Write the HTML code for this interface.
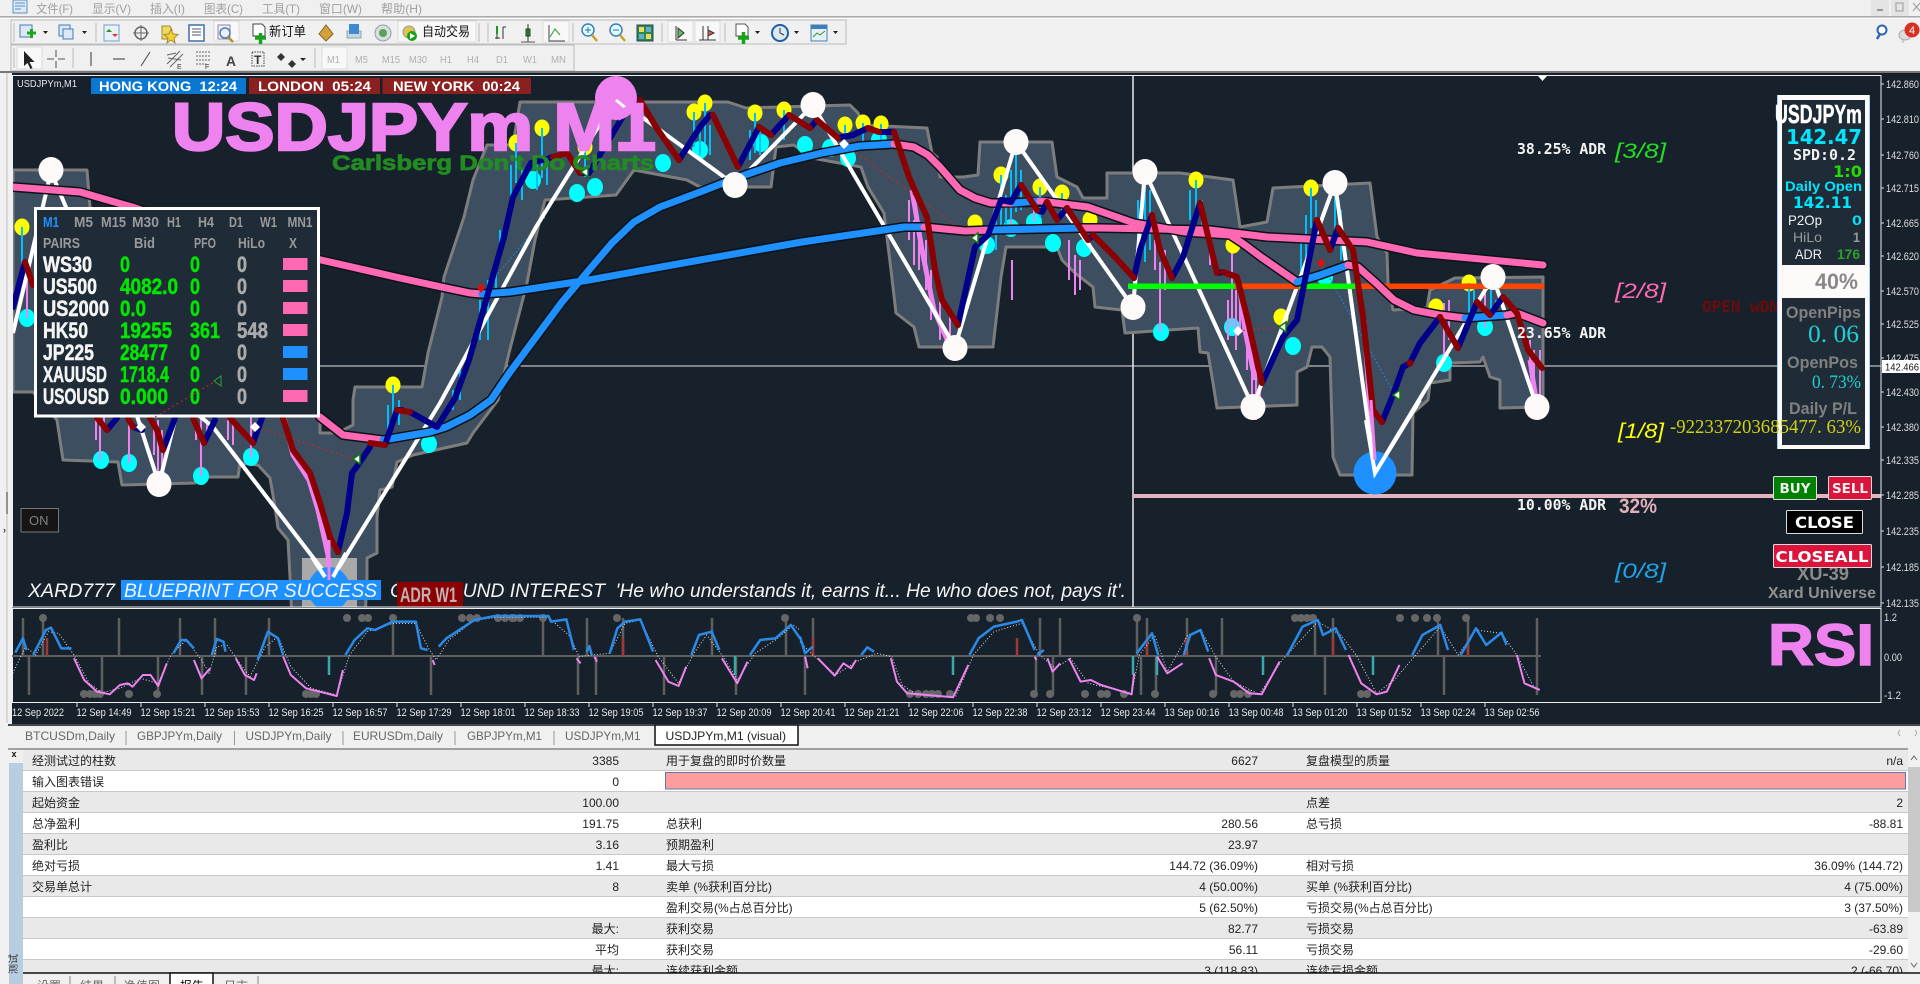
<!DOCTYPE html>
<html><head><meta charset="utf-8"><title>USDJPYm,M1</title>
<style>
html,body{margin:0;padding:0;background:#f0f0f0;width:1920px;height:984px;overflow:hidden}
svg{display:block;position:absolute;left:0;top:0}
text{font-family:"Liberation Sans","Noto Sans CJK SC",sans-serif;white-space:pre}
.b{font-weight:bold}
.m{font-family:"DejaVu Sans Mono","Liberation Mono",monospace}
.dj{font-family:"DejaVu Sans","Liberation Sans",sans-serif;font-weight:bold}
.se{font-family:"Liberation Serif","Noto Serif CJK SC",serif}
.i{font-style:italic}
.t{font-size:12px;fill:#222}
.r{text-anchor:end}
.ax{font-size:11px;fill:#ddd}
.tm{font-size:11px;fill:#e8e8e8}
.tab{font-size:12px;fill:#666}
.mn{font-size:12px;fill:#a0a0a0}
.tf{font-size:10px;fill:#b0b0b0}
.ph{font-size:15px;font-weight:bold;fill:#999}
.pr{font-size:22px;font-weight:bold;stroke-width:.5px}
.ma,.fl{fill:none;stroke-linejoin:round;stroke-linecap:round}
</style></head><body>
<svg width="1920" height="984" viewBox="0 0 1920 984" xmlns="http://www.w3.org/2000/svg">
<defs><clipPath id="cm"><rect x="13" y="76" width="1868" height="531"/></clipPath></defs>
<rect width="1920" height="984" fill="#f0f0f0"/>

<!-- menu bar -->
<g>
<rect x="13" y="0" width="14" height="13" fill="#dce8f4" stroke="#5b8fc4"/>
<path d="M15 3h10M15 6h10M15 9h6" stroke="#5b8fc4"/>
<text class="mn" x="36" y="13" textLength="37" lengthAdjust="spacingAndGlyphs">文件(F)</text>
<text class="mn" x="92" y="13" textLength="39" lengthAdjust="spacingAndGlyphs">显示(V)</text>
<text class="mn" x="150" y="13" textLength="35" lengthAdjust="spacingAndGlyphs">插入(I)</text>
<text class="mn" x="204" y="13" textLength="39" lengthAdjust="spacingAndGlyphs">图表(C)</text>
<text class="mn" x="262" y="13" textLength="38" lengthAdjust="spacingAndGlyphs">工具(T)</text>
<text class="mn" x="319" y="13" textLength="43" lengthAdjust="spacingAndGlyphs">窗口(W)</text>
<text class="mn" x="381" y="13" textLength="41" lengthAdjust="spacingAndGlyphs">帮助(H)</text>
<rect x="1871" y="0" width="18" height="16" fill="#e4e4e4"/><rect x="1891" y="0" width="18" height="16" fill="#e4e4e4"/>
<rect x="1877" y="9" width="6" height="2" fill="#999"/><rect x="1896" y="3" width="7" height="8" fill="none" stroke="#999"/>
<path d="M1913 3l7 8M1920 3l-7 8" stroke="#999"/>
<rect y="16" width="1920" height="1.5" fill="#aaa"/><rect y="18" width="1920" height="1" fill="#fff"/>
</g>

<!-- toolbars -->
<g>
<rect x="11" y="20" width="835" height="24" fill="#f0f0f0" stroke="#bbb"/>
<rect x="11" y="45" width="563" height="26" fill="#f0f0f0" stroke="#bbb"/>
<path d="M14 23v19M14 48v20M479 23v19M315 48v20M96 23v19M237 23v19M488 23v19M573 23v19M662 23v19M725 23v19M73 48v20" stroke="#bbb"/>
<rect x="214" y="21" width="25" height="20" fill="#f8f8f8" stroke="#ddd"/>
<rect x="398" y="21" width="78" height="21" fill="#f8f8f8" stroke="#ddd"/>
<rect x="543" y="21" width="26" height="21" fill="#f8f8f8" stroke="#ddd"/>
<rect x="668" y="21" width="25" height="21" fill="#f8f8f8" stroke="#ddd"/>
<rect x="695" y="21" width="25" height="21" fill="#f8f8f8" stroke="#ddd"/>
<rect x="17" y="47" width="25" height="22" fill="#f8f8f8" stroke="#ddd"/>
<rect x="322" y="47" width="25" height="22" fill="#f8f8f8" stroke="#ddd"/>

<!-- row1 icons -->
<rect x="20" y="25" width="12" height="12" fill="#dce8f4" stroke="#3f7eb8"/><path d="M27 33h9M31.500 29v9" stroke="#1fa51f" stroke-width="3"/>
<path d="M43 31h5l-2.500 3z" fill="#222"/>
<rect x="59" y="25" width="11" height="11" fill="#dce8f4" stroke="#3f7eb8"/><rect x="63" y="29" width="10" height="10" fill="#dce8f4" stroke="#3f7eb8"/>
<path d="M82 31h5l-2.500 3z" fill="#222"/>
<rect x="104" y="25" width="15" height="16" fill="#e8f0f8" stroke="#6f9fca"/><path d="M109 29l3 3h-6z" fill="#1a9a1a"/><path d="M115 37l-3-3h6z" fill="#d33"/>
<circle cx="141" cy="33" r="6" fill="none" stroke="#666" stroke-width="1.500"/><path d="M141 25v16M133 33h16" stroke="#666"/>
<path d="M162 26h8l2 4v9h-10z" fill="#f2d860" stroke="#a08a30"/><path d="M171 29l2 5 5 .5-4 3.500 1 5-4-3-4 3 1-5-4-3.500 5-.5z" fill="#f6d22e" stroke="#a08a30"/>
<rect x="189" y="25" width="15" height="16" fill="#fff" stroke="#3f6fa8" stroke-width="1.500"/><path d="M192 29h9M192 32h9M192 35h9" stroke="#556"/>
<rect x="218" y="25" width="12" height="14" fill="#eef" stroke="#889"/><circle cx="225" cy="33" r="5" fill="none" stroke="#4a7fb4" stroke-width="1.500"/><path d="M228 37l5 5" stroke="#b98a2e" stroke-width="2.500"/>
<path d="M253 24h9l3 3v9h-12z" fill="#fff" stroke="#444"/><path d="M255 38h11M260.500 33v11" stroke="#19a319" stroke-width="3.500"/>
<text x="269" y="36" font-size="13" fill="#111" textLength="37" lengthAdjust="spacingAndGlyphs">新订单</text>
<path d="M319 34l7-9 7 9-7 7z" fill="#d3a03c" stroke="#8a6720"/>
<path d="M347 38h14v-7h-14z" fill="#c5d5e4" stroke="#8aa"/><rect x="349" y="24" width="10" height="10" fill="#3f8ad0"/>
<circle cx="383" cy="33" r="8" fill="#d5e0d8" stroke="#99b"/><circle cx="383" cy="33" r="4" fill="#5aa05a"/>
<circle cx="409" cy="32" r="6" fill="#e0c34a" stroke="#999"/><circle cx="412" cy="36" r="5" fill="#19a019"/><path d="M410 33l5 3-5 3z" fill="#fff"/>
<text x="422" y="36" font-size="13" fill="#111" textLength="48" lengthAdjust="spacingAndGlyphs">自动交易</text>
<path d="M497 26v13M495 38h5M503 27v12M503 27h3" stroke="#333"/><path d="M497 26v8" stroke="#1a9a1a" stroke-width="2"/>
<rect x="526" y="29" width="4" height="7" fill="#1db31d" stroke="#333"/><path d="M528 24v18" stroke="#333"/><path d="M521 42h14" stroke="#555"/>
<path d="M549 25v16h16" fill="none" stroke="#444"/><path d="M550 37l5-8 5 6" fill="none" stroke="#2aa12a"/>
<circle cx="588" cy="30" r="6" fill="#dff" stroke="#3f7eb8" stroke-width="1.500"/><path d="M585 30h6M588 27v6" stroke="#2f6ab8"/><path d="M592 35l5 6" stroke="#c9a020" stroke-width="2.500"/>
<circle cx="616" cy="30" r="6" fill="#dff" stroke="#3f7eb8" stroke-width="1.500"/><path d="M613 30h6" stroke="#2f6ab8"/><path d="M620 35l5 6" stroke="#c9a020" stroke-width="2.500"/>
<rect x="637" y="25" width="16" height="16" fill="#2a8a4a" stroke="#246"/><rect x="639" y="27" width="5" height="5" fill="#f2d860"/><rect x="646" y="27" width="5" height="5" fill="#6ac"/><rect x="639" y="34" width="5" height="5" fill="#6ac"/><rect x="646" y="34" width="5" height="5" fill="#f2d860"/>
<path d="M676 26v14M676 40h11" stroke="#333" fill="none"/><path d="M678 28l6 5-6 5z" fill="#5bbf5b" stroke="#333"/>
<path d="M703 26v14M699 40h17M708 26v14" stroke="#333" fill="none"/><path d="M708 30l6 3-6 3z" fill="#e06060" stroke="#333"/>
<path d="M736 24h9l3 3v9h-12z" fill="#fff" stroke="#555"/><path d="M738 38h11M743.500 32v12" stroke="#19a319" stroke-width="3.500"/><path d="M755 31h5l-2.500 3z" fill="#222"/>
<circle cx="780" cy="33" r="8" fill="#dce8f4" stroke="#1f5fa8" stroke-width="2"/><path d="M780 28v5l4 2" fill="none" stroke="#333"/><path d="M794 31h5l-2.500 3z" fill="#222"/>
<rect x="811" y="25" width="16" height="16" fill="#e8eef6" stroke="#3f7eb8"/><rect x="811" y="25" width="16" height="4" fill="#3f7eb8"/><path d="M813 37l4-4 3 2 5-4" fill="none" stroke="#393"/><path d="M833 31h5l-2.500 3z" fill="#222"/>
<!-- row2 icons -->
<path d="M24 51v15l3.500-3 3 6 2-1-3-6h5z" fill="#222"/>
<path d="M56 50v18M47 59h18" stroke="#555"/><rect x="54" y="57" width="4" height="4" fill="#f0f0f0"/>
<path d="M91 52v14" stroke="#333"/><path d="M113 59h12" stroke="#333"/><path d="M141 66l9-14" stroke="#444"/>
<path d="M167 64l13-13M170 67l13-13M168 58l13 2M167 55l9-2" stroke="#666"/><text x="177" y="69" font-size="7" fill="#333">E</text>
<path d="M196 52h14M196 56h14M196 60h14M196 64h10" stroke="#666" stroke-dasharray="2 1"/><text x="205" y="69" font-size="7" fill="#333">F</text>
<text x="226" y="66" font-size="14" fill="#444" class="b" textLength="10" lengthAdjust="spacingAndGlyphs">A</text>
<rect x="252" y="52" width="12" height="14" fill="none" stroke="#444" stroke-dasharray="1.500 1"/><text x="254" y="64" font-size="12" fill="#333" class="b">T</text>
<path d="M281 53l4 4-4 4-4-4zM292 60l4 4-4 4-4-4z" fill="#333"/><path d="M300 58h6l-3 3z" fill="#222"/>
<text class="tf" x="327" y="63" textLength="13" lengthAdjust="spacingAndGlyphs">M1</text>
<text class="tf" x="355" y="63" textLength="13" lengthAdjust="spacingAndGlyphs">M5</text>
<text class="tf" x="382" y="63" textLength="18" lengthAdjust="spacingAndGlyphs">M15</text>
<text class="tf" x="409" y="63" textLength="18" lengthAdjust="spacingAndGlyphs">M30</text>
<text class="tf" x="440" y="63" textLength="12" lengthAdjust="spacingAndGlyphs">H1</text>
<text class="tf" x="467" y="63" textLength="12" lengthAdjust="spacingAndGlyphs">H4</text>
<text class="tf" x="496" y="63" textLength="12" lengthAdjust="spacingAndGlyphs">D1</text>
<text class="tf" x="523" y="63" textLength="14" lengthAdjust="spacingAndGlyphs">W1</text>
<text class="tf" x="551" y="63" textLength="15" lengthAdjust="spacingAndGlyphs">MN</text>
<!-- right icons -->
<circle cx="1882" cy="30" r="4.500" fill="#fff" stroke="#2f62b8" stroke-width="2"/><path d="M1880 34l-3 5" stroke="#2f62b8" stroke-width="2.500"/>
<ellipse cx="1905" cy="35" rx="6" ry="5" fill="#ddd" stroke="#aaa"/><path d="M1903 40v3" stroke="#aaa"/><circle cx="1912" cy="30" r="7.500" fill="#d9301f"/>
<text x="1912" y="34" font-size="11" fill="#fff" text-anchor="middle">4</text>
<rect y="71" width="1920" height="2.500" fill="#777"/>
</g>

<!-- left strip -->
<rect x="0" y="73" width="12" height="652" fill="#f0f0f0"/>
<path d="M7 73v650" stroke="#c0c0c0"/>
<path d="M7 492v22" stroke="#333"/>
<text x="3" y="533" font-size="9" fill="#333" class="b">›</text>

<!-- MAIN CHART -->
<rect x="12" y="73" width="1908" height="651" fill="#17212c"/>
<g clip-path="url(#cm)">
<path d="M13 366H1881" stroke="#e8e8e8"/>
<path d="M1133 76V607" stroke="#e8e8e8" stroke-width="1.500"/>
<text x="1716" y="618" font-size="16" class="b" fill="#daa520" textLength="46" lengthAdjust="spacingAndGlyphs">·SELL</text>

<polygon fill="#3c4e60" stroke="#7d7d7d" stroke-width="3" stroke-linejoin="round" points="13,170 87,170 90,207 320,417 320,433 337,433 353,425 353,400 355,387 422,387 428,353 442,297 444,277 464,217 473,180 487,145 513,145 520,102 656,102 700,102 728,102 746,108 850,105 858,113 863,125 927,128 932,153 937,157 940,177 963,177 978,175 980,142 1052,142 1057,177 1077,187 1083,198 1107,198 1107,173 1180,173 1233,180 1240,227 1267,222 1273,188 1370,183 1377,237 1387,253 1388,283 1393,310 1427,308 1430,290 1455,278 1543,277 1543,407 1500,408 1500,380 1490,377 1483,357 1480,362 1450,363 1450,380 1430,383 1428,400 1413,413 1412,475 1340,475 1333,457 1330,357 1322,347 1312,347 1307,367 1297,372 1297,405 1217,408 1213,383 1208,353 1200,352 1198,328 1125,333 1122,310 1095,307 1093,287 1075,273 1062,260 1057,247 1006,247 1001,277 993,347 919,347 914,327 896,313 891,270 884,213 868,187 861,167 812,158 794,145 776,147 771,187 731,187 700,187 687,180 634,170 616,195 545,200 535,240 527,283 509,353 498,400 473,433 467,443 413,455 397,462 392,487 380,490 377,517 377,553 367,558 367,577 365,620 292,620 290,577 288,540 278,528 275,507 270,478 258,465 240,463 238,477 197,477 195,483 122,485 118,462 63,460 57,420 33,392 13,392"/>
<rect x="302" y="558" width="55" height="49" fill="#a9a9a9"/>
<path d="M1133 496H1881" stroke="#e5b3bd" stroke-width="4"/>

<!-- cyan circles -->
<g fill="#00ffff">
<ellipse cx="27" cy="318" rx="8" ry="9"/><ellipse cx="533" cy="180" rx="8" ry="9"/><ellipse cx="577" cy="193" rx="8" ry="9"/><ellipse cx="595" cy="187" rx="8" ry="9"/><ellipse cx="663" cy="163" rx="8" ry="9"/><ellipse cx="700" cy="150" rx="8" ry="9"/><ellipse cx="761" cy="143" rx="8" ry="9"/><ellipse cx="805" cy="145" rx="8" ry="9"/><ellipse cx="848" cy="158" rx="8" ry="9"/><ellipse cx="879" cy="140" rx="8" ry="9"/><ellipse cx="830" cy="148" rx="8" ry="9"/><ellipse cx="1011" cy="228" rx="8" ry="9"/><ellipse cx="1034" cy="222" rx="8" ry="9"/><ellipse cx="987" cy="245" rx="8" ry="9"/><ellipse cx="1053" cy="243" rx="8" ry="9"/><ellipse cx="1084" cy="248" rx="8" ry="9"/><ellipse cx="1161" cy="332" rx="8" ry="9"/><ellipse cx="1232" cy="327" rx="8" ry="9"/><ellipse cx="1293" cy="346" rx="8" ry="9"/><ellipse cx="1325" cy="277" rx="8" ry="9"/><ellipse cx="1444" cy="363" rx="8" ry="9"/><ellipse cx="1485" cy="327" rx="8" ry="9"/><ellipse cx="101" cy="460" rx="8" ry="9"/><ellipse cx="129" cy="463" rx="8" ry="9"/><ellipse cx="201" cy="476" rx="8" ry="9"/><ellipse cx="251" cy="457" rx="8" ry="9"/><ellipse cx="429" cy="444" rx="8" ry="9"/>
</g>
<!-- violet spikes -->
<path fill="none" stroke="#ee82ee" stroke-width="2" d="M27 318v-50M100 460v-50M96 440v-30M104 430v-20M129 463v-50M158 480v-60M154 455v-30M162 470v-40M201 476v-60M196 440v-20M207 440v-20M228 440v-20M233 445v-25M251 457v-40M1160 332v-70M1165 290v-40M1155 270v-30M1232 327v-90M1236 350v-60M1228 340v-40M1240 330v-30M1247 370v-40M1444 363v-60M1449 340v-40M1485 327v-45M909 240v-40M914 265v-45M919 270v-40M926 290v-50M931 320v-50M940 340v-50M950 355v-40M1011 228v-30M1034 222v-20M1069 280v-40M1075 295v-40M1080 290v-30M1012 300v-40M1252 400v-50M1256 420v-50M1260 410v-30M1540 400v-50M1534 390v-40M1530 370v-30M1210 265v-40"/>
<path fill="none" stroke="#ee82ee" stroke-width="5" d="M284 418l9 37 16 25 9 30 10 45 2 30M1364 320l4 60 6 90M912 190l10 60 12 60 20 45M1240 290l5 40 10 50M1530 360l6 40"/>
<!-- yellow circles -->
<g fill="#ffff00">
<ellipse cx="22" cy="227" rx="7.500" ry="8.500"/><ellipse cx="393" cy="385" rx="7.500" ry="8.500"/><ellipse cx="516" cy="143" rx="7.500" ry="8.500"/><ellipse cx="542" cy="128" rx="7.500" ry="8.500"/><ellipse cx="585" cy="147" rx="7.500" ry="8.500"/><ellipse cx="694" cy="112" rx="7.500" ry="8.500"/><ellipse cx="705" cy="103" rx="7.500" ry="8.500"/><ellipse cx="755" cy="113" rx="7.500" ry="8.500"/><ellipse cx="784" cy="110" rx="7.500" ry="8.500"/><ellipse cx="845" cy="125" rx="7.500" ry="8.500"/><ellipse cx="863" cy="123" rx="7.500" ry="8.500"/><ellipse cx="881" cy="124" rx="7.500" ry="8.500"/><ellipse cx="1001" cy="175" rx="7.500" ry="8.500"/><ellipse cx="1040" cy="187" rx="7.500" ry="8.500"/><ellipse cx="1062" cy="193" rx="7.500" ry="8.500"/><ellipse cx="975" cy="223" rx="7.500" ry="8.500"/><ellipse cx="1090" cy="220" rx="7.500" ry="8.500"/><ellipse cx="1196" cy="180" rx="7.500" ry="8.500"/><ellipse cx="1311" cy="188" rx="7.500" ry="8.500"/><ellipse cx="1233" cy="245" rx="7.500" ry="8.500"/><ellipse cx="1281" cy="317" rx="7.500" ry="8.500"/><ellipse cx="1436" cy="307" rx="7.500" ry="8.500"/><ellipse cx="1469" cy="283" rx="7.500" ry="8.500"/>
</g>
<!-- blue spikes -->
<path fill="none" stroke="#00bfff" stroke-width="2" d="M22 227v45M393 385v40M388 405v25M399 400v25M516 143v40M511 165v35M522 170v30M542 128v50M537 160v30M547 155v30M500 230v30M496 260v40M488 280v60M480 300v40M460 370v30M453 390v20M585 147v30M694 112v35M705 103v40M700 125v30M710 125v30M755 113v40M750 130v30M760 130v25M784 110v30M845 125v30M863 123v20M881 124v20M1001 175v60M996 200v50M1006 195v40M1016 142v70M1011 170v50M1021 170v40M1040 187v30M1062 193v25M1145 172v90M1138 200v50M1150 190v60M1196 180v40M1190 190v30M1202 200v30M1311 188v40M1306 215v60M1301 240v60M1316 200v30M1335 183v60M1341 210v50M1469 283v30M1474 290v20M1491 290v20M1496 300v20"/>
<path fill="none" stroke="#1f87d8" stroke-width="1" stroke-dasharray="2 2" d="M1395 395L1321 263M545 217L487 287"/>
<path fill="none" stroke="#d22" stroke-width="1" stroke-dasharray="2 3" d="M255 427L355 459M216 381L155 417M844 144L973 238M1238 331L1281 327"/>

<!-- zigzag -->
<path fill="none" stroke="#fff" stroke-width="4" stroke-linejoin="round" d="M13 333L51 172L80 240L159 484L180 400L213 427L328 577L333 577L440 403L536 227L616 98L735 185L813 105L955 347L1016 142L1133 307L1145 172L1253 407L1335 183L1375 473L1493 277L1537 407"/>

<!-- levels -->
<rect x="1128" y="283.500" width="107" height="5.500" fill="#00ff00"/>
<rect x="1235" y="283.500" width="64" height="5.500" fill="#ff4500"/>
<rect x="1299" y="283.500" width="56" height="5.500" fill="#00ff00"/>
<rect x="1355" y="283.500" width="189" height="5.500" fill="#ff4500"/>

<!-- MAs -->
<path class="ma" stroke="#0c1218" stroke-width="10" d="M13 187L80 192L132 207L200 230L321 260L400 278L446 288L470 293L482 294L510 292L589 280L700 260L802 242L904 227L924 227L965 231L991 230L1083 228L1100 228L1210 230L1267 237L1367 242L1417 253L1543 265"/>
<path class="ma" stroke="#0c1218" stroke-width="10" d="M320 417L343 435L383 440L430 432L446 427L470 415L491 400L510 372L536 337L562 302L589 270L612 243L634 222L660 207L700 192L736 178L780 163L822 153L860 146L894 144L914 147L928 155L940 167L960 190L975 198L991 203L1047 202L1088 207L1134 223L1185 232L1230 235L1245 245L1261 257L1297 282L1320 275L1348 265L1358 267L1376 283L1394 300L1414 310L1440 315L1465 318L1507 315L1517 313L1543 323"/>
<path class="ma" stroke="#ff69b4" stroke-width="7" d="M13 187L80 192L132 207L200 230L321 260L400 278L446 288L470 293L482 294"/>
<path class="ma" stroke="#1e90ff" stroke-width="7" d="M482 294L510 292L589 280L700 260L802 242L904 227L924 227"/>
<path class="ma" stroke="#ff69b4" stroke-width="7" d="M924 227L965 231L991 230"/>
<path class="ma" stroke="#1e90ff" stroke-width="7" d="M991 230L1083 228"/>
<path class="ma" stroke="#ff69b4" stroke-width="7" d="M1083 228L1100 228L1210 230L1267 237L1367 242L1417 253L1543 265"/>
<path class="ma" stroke="#ff69b4" stroke-width="7" d="M320 417L343 435L383 440"/>
<path class="ma" stroke="#1e90ff" stroke-width="7" d="M383 440L430 432L446 427L470 415L491 400L510 372L536 337L562 302L589 270L612 243L634 222L660 207L700 192L736 178L780 163L822 153L860 146L894 144"/>
<path class="ma" stroke="#ff69b4" stroke-width="7" d="M894 144L914 147L928 155L940 167L960 190L975 198L991 203L1015 203"/>
<path class="ma" stroke="#1e90ff" stroke-width="7" d="M1015 203L1040 201"/>
<path class="ma" stroke="#ff69b4" stroke-width="7" d="M1040 201L1088 207L1134 223L1185 232L1230 235L1245 245L1261 257L1297 282"/>
<path class="ma" stroke="#1e90ff" stroke-width="7" d="M1297 282L1320 275L1348 265"/>
<path class="ma" stroke="#ff69b4" stroke-width="7" d="M1348 265L1358 267L1376 283L1394 300L1414 310L1440 315L1465 318"/>
<path class="ma" stroke="#1e90ff" stroke-width="7" d="M1465 318L1507 315"/>
<path class="ma" stroke="#ff69b4" stroke-width="7" d="M1507 315L1517 313L1543 323"/>

<!-- fast line -->
<path class="fl" stroke="#00008b" stroke-width="6" d="M13 307L25 262M107 430L117 418M133 427L142 430M163 450L175 418M204 443L215 420M253 443L262 418M338 552L347 513L352 473L358 465L370 447M385 445L397 410L402 410M410 412L437 427L455 398L469 360L487 297L504 237L513 197L531 163L553 157M580 173L589 173L625 113L640 100M679 160L700 127L710 115M738 167L759 127M771 135L789 115M810 128L817 120M838 138L853 135L868 128M879 132L894 132M958 325L975 247L988 235L1001 200L1011 202L1021 185M1037 210L1042 212L1047 202M1057 220L1067 208M1088 240L1093 235M1134 278L1140 250L1152 215M1172 278L1183 257L1200 203M1217 273L1223 272M1262 383L1283 337L1297 320L1317 220M1330 250L1338 228M1382 422L1393 395L1403 367L1410 363L1420 343L1440 317M1458 348L1477 302M1490 315L1503 297"/>
<path class="fl" stroke="#8b0000" stroke-width="6" d="M25 262L33 285M97 418L107 430M128 418L133 427M150 418L157 430L163 450M193 418L204 443M230 418L253 443M283 418L293 450L310 473L320 503L330 537L338 552M370 443L385 445M397 410L410 412M553 157L567 153L580 173M640 100L656 127L679 160M713 115L738 167M759 127L771 135M789 115L810 128M817 120L838 138M868 128L879 132M894 132L909 177L919 200L927 217L935 270L942 300L958 325M1021 185L1037 210M1047 202L1057 220M1067 208L1088 240M1093 235L1116 258L1134 278M1152 215L1160 250L1172 278M1200 203L1217 273M1223 272L1237 277L1247 317L1262 383M1317 220L1330 250M1338 228L1353 250L1363 317L1373 410L1382 422M1440 317L1458 348M1477 302L1490 315M1503 297L1517 313L1528 350L1542 368"/>
<circle cx="1410" cy="363" r="3.500" fill="#8b0000"/>

<!-- white circles -->
<g fill="#fffafa">
<ellipse cx="51" cy="170" rx="12.500" ry="13"/><ellipse cx="159" cy="484" rx="12.500" ry="13"/><ellipse cx="735" cy="185" rx="12.500" ry="13"/><ellipse cx="813" cy="105" rx="12.500" ry="13"/><ellipse cx="955" cy="348" rx="12.500" ry="13"/><ellipse cx="1016" cy="142" rx="12.500" ry="13"/><ellipse cx="1133" cy="307" rx="12.500" ry="13"/><ellipse cx="1145" cy="172" rx="12.500" ry="13"/><ellipse cx="1253" cy="407" rx="12.500" ry="13"/><ellipse cx="1335" cy="183" rx="12.500" ry="13"/><ellipse cx="1493" cy="277" rx="12.500" ry="13"/><ellipse cx="1537" cy="407" rx="12.500" ry="13"/>
</g>
<circle cx="1375" cy="473" r="21.500" fill="#1e90ff"/>
<path d="M1366 420L1375 473L1420 400" fill="none" stroke="#fff" stroke-width="4"/>
<path d="M1371 400l4 60" stroke="#ee82ee" stroke-width="3"/>
<ellipse cx="329" cy="589" rx="21" ry="22" fill="#1e90ff"/>
<path d="M312 557L325 577M346 553L333 577" stroke="#fff" stroke-width="4"/>
<path d="M329 540v40" stroke="#ee82ee" stroke-width="3"/>
<ellipse cx="616" cy="98" rx="21" ry="22" fill="#ee82ee"/>
<path d="M616 100l11 9" stroke="#fff" stroke-width="3"/>

<!-- arrows -->
<path d="M141 422l5 5-5 5-5-5zM255 422l5 5-5 5-5-5zM844 139l5 5-5 5-5-5zM1238 326l5 5-5 5-5-5z" fill="#fff"/>
<path d="M481 283l4 5-4 5-4-5zM1321 258l4 5-4 5-4-5z" fill="#e01010"/>
<path d="M360 454v10l-7-5zM221 376v10l-7-5zM588 167v10l-7-5zM978 233v10l-7-5zM1286 322v10l-7-5zM1400 390v10l-7-5z" fill="#fff" stroke="#0a7a0a" stroke-width="1.500"/>
<path d="M1538 76h9l-4.500 5z" fill="#fff"/>

<!-- labels over chart -->
<text x="17" y="87" font-size="10.500" fill="#e8e8e8" textLength="60" lengthAdjust="spacingAndGlyphs">USDJPYm,M1</text>
<rect x="91" y="78" width="155" height="16" fill="#0a78d0"/><rect x="249" y="78" width="131" height="16" fill="#8b2020"/><rect x="382.500" y="78" width="148.500" height="16" fill="#8b2020"/>
<text x="99" y="91" font-size="14" class="b" fill="#fff" textLength="138" lengthAdjust="spacingAndGlyphs">HONG KONG  12:24</text>
<text x="258" y="91" font-size="14" class="b" fill="#fff" textLength="113" lengthAdjust="spacingAndGlyphs">LONDON  05:24</text>
<text x="393" y="91" font-size="14" class="b" fill="#fff" textLength="127" lengthAdjust="spacingAndGlyphs">NEW YORK  00:24</text>
<text x="172" y="150" font-size="67" class="b" fill="#ee82ee" stroke="#ee82ee" stroke-width="2.500" textLength="484" lengthAdjust="spacingAndGlyphs">USDJPYm M1</text>
<text x="332" y="170" font-size="21" class="b" fill="#228b22" stroke="#228b22" stroke-width=".7" textLength="322" lengthAdjust="spacingAndGlyphs">Carlsberg Don't Do Charts</text>

<text class="m b" x="1517" y="154" font-size="14.800" fill="#f2f2f2">38.25% ADR</text>
<text class="m b" x="1517" y="338" font-size="14.800" fill="#f2f2f2">23.65% ADR</text>
<text class="m b" x="1517" y="510" font-size="14.800" fill="#f2f2f2">10.00% ADR</text>
<text class="i" x="1615" y="158" font-size="21" fill="#22dd22" textLength="51" lengthAdjust="spacingAndGlyphs">[3/8]</text>
<text class="i" x="1615" y="298" font-size="21" fill="#ff69b4" textLength="51" lengthAdjust="spacingAndGlyphs">[2/8]</text>
<text class="i" x="1618" y="438" font-size="21" fill="#ffff00" textLength="46" lengthAdjust="spacingAndGlyphs">[1/8]</text>
<text class="i" x="1615" y="578" font-size="21" fill="#1ea4e6" textLength="51" lengthAdjust="spacingAndGlyphs">[0/8]</text>
<text x="1619" y="513" font-size="21" class="b" fill="#e0b0b8" textLength="38" lengthAdjust="spacingAndGlyphs">32%</text>
<text class="m b" x="1702" y="312" font-size="16" fill="#6a0c0c">OPEN wDN</text>

<text x="28" y="597" font-size="19" class="i" fill="#f4f4f4" textLength="87" lengthAdjust="spacingAndGlyphs">XARD777</text>
<rect x="121" y="580" width="260" height="20" fill="#1e90ff"/>
<text x="124" y="597" font-size="19" class="i" fill="#f0f6ff" textLength="253" lengthAdjust="spacingAndGlyphs">BLUEPRINT FOR SUCCESS</text>
<text x="390" y="597" font-size="19" class="i" fill="#f4f4f4" textLength="736" lengthAdjust="spacingAndGlyphs">COMPOUND INTEREST  'He who understands it, earns it... He who does not, pays it'.</text>
<rect x="397" y="582" width="66" height="25" fill="#8b0000"/>
<text x="400" y="602" font-size="21" class="b" fill="#c0b0b0" textLength="57" lengthAdjust="spacingAndGlyphs">ADR W1</text>
<rect x="21" y="508.500" width="37.500" height="23.500" fill="#151515" stroke="#777"/>
<text x="29" y="525" font-size="13" fill="#808080">ON</text>
</g>

<!-- pairs panel -->
<rect x="35.500" y="208.500" width="283" height="207.500" fill="#1f2c37" stroke="#fff" stroke-width="3"/>
<text class="ph" x="43" y="227" textLength="16" lengthAdjust="spacingAndGlyphs" style="fill:#1e90ff">M1</text>
<text class="ph" x="74" y="227" textLength="19" lengthAdjust="spacingAndGlyphs">M5</text>
<text class="ph" x="101" y="227" textLength="25" lengthAdjust="spacingAndGlyphs">M15</text>
<text class="ph" x="132" y="227" textLength="27" lengthAdjust="spacingAndGlyphs">M30</text>
<text class="ph" x="167" y="227" textLength="14" lengthAdjust="spacingAndGlyphs">H1</text>
<text class="ph" x="198" y="227" textLength="16" lengthAdjust="spacingAndGlyphs">H4</text>
<text class="ph" x="229" y="227" textLength="14" lengthAdjust="spacingAndGlyphs">D1</text>
<text class="ph" x="260" y="227" textLength="17" lengthAdjust="spacingAndGlyphs">W1</text>
<text class="ph" x="287.500" y="227" textLength="25" lengthAdjust="spacingAndGlyphs">MN1</text>
<text class="ph" x="43" y="248" textLength="37" lengthAdjust="spacingAndGlyphs">PAIRS</text>
<text class="ph" x="134" y="248" textLength="21" lengthAdjust="spacingAndGlyphs">Bid</text>
<text class="ph" x="194" y="248" textLength="22" lengthAdjust="spacingAndGlyphs">PFO</text>
<text class="ph" x="238" y="248" textLength="27" lengthAdjust="spacingAndGlyphs">HiLo</text>
<text class="ph" x="289" y="248" textLength="8" lengthAdjust="spacingAndGlyphs">X</text>
<g fill="#f4f4f4" stroke="#f4f4f4">
<text class="pr" x="43" y="272" textLength="49" lengthAdjust="spacingAndGlyphs">WS30</text>
<text class="pr" x="43" y="294" textLength="54" lengthAdjust="spacingAndGlyphs">US500</text>
<text class="pr" x="43" y="316" textLength="66" lengthAdjust="spacingAndGlyphs">US2000</text>
<text class="pr" x="43" y="338" textLength="45" lengthAdjust="spacingAndGlyphs">HK50</text>
<text class="pr" x="43" y="360" textLength="51" lengthAdjust="spacingAndGlyphs">JP225</text>
<text class="pr" x="43" y="382" textLength="64" lengthAdjust="spacingAndGlyphs">XAUUSD</text>
<text class="pr" x="43" y="404" textLength="66" lengthAdjust="spacingAndGlyphs">USOUSD</text>
</g>
<g fill="#00e600" stroke="#00e600">
<text class="pr" x="120" y="272" textLength="10" lengthAdjust="spacingAndGlyphs">0</text>
<text class="pr" x="120" y="294" textLength="58" lengthAdjust="spacingAndGlyphs">4082.0</text>
<text class="pr" x="120" y="316" textLength="26" lengthAdjust="spacingAndGlyphs">0.0</text>
<text class="pr" x="120" y="338" textLength="52" lengthAdjust="spacingAndGlyphs">19255</text>
<text class="pr" x="120" y="360" textLength="48" lengthAdjust="spacingAndGlyphs">28477</text>
<text class="pr" x="120" y="382" textLength="49" lengthAdjust="spacingAndGlyphs">1718.4</text>
<text class="pr" x="120" y="404" textLength="48" lengthAdjust="spacingAndGlyphs">0.000</text>
<text class="pr" x="190" y="272" textLength="10" lengthAdjust="spacingAndGlyphs">0</text>
<text class="pr" x="190" y="294" textLength="10" lengthAdjust="spacingAndGlyphs">0</text>
<text class="pr" x="190" y="316" textLength="10" lengthAdjust="spacingAndGlyphs">0</text>
<text class="pr" x="190" y="338" textLength="30" lengthAdjust="spacingAndGlyphs">361</text>
<text class="pr" x="190" y="360" textLength="10" lengthAdjust="spacingAndGlyphs">0</text>
<text class="pr" x="190" y="382" textLength="10" lengthAdjust="spacingAndGlyphs">0</text>
<text class="pr" x="190" y="404" textLength="10" lengthAdjust="spacingAndGlyphs">0</text>
</g>
<g fill="#aaa" stroke="#aaa">
<text class="pr" x="237" y="272" textLength="10" lengthAdjust="spacingAndGlyphs">0</text>
<text class="pr" x="237" y="294" textLength="10" lengthAdjust="spacingAndGlyphs">0</text>
<text class="pr" x="237" y="316" textLength="10" lengthAdjust="spacingAndGlyphs">0</text>
<text class="pr" x="237" y="338" textLength="31" lengthAdjust="spacingAndGlyphs">548</text>
<text class="pr" x="237" y="360" textLength="10" lengthAdjust="spacingAndGlyphs">0</text>
<text class="pr" x="237" y="382" textLength="10" lengthAdjust="spacingAndGlyphs">0</text>
<text class="pr" x="237" y="404" textLength="10" lengthAdjust="spacingAndGlyphs">0</text>
</g>
<g fill="#ff69b4"><rect x="283" y="258" width="24.500" height="12"/><rect x="283" y="280" width="24.500" height="12"/><rect x="283" y="302" width="24.500" height="12"/><rect x="283" y="324" width="24.500" height="12"/><rect x="283" y="390" width="24.500" height="12"/></g>
<g fill="#1e90ff"><rect x="283" y="346" width="24.500" height="12"/><rect x="283" y="368" width="24.500" height="12"/></g>
<path d="M155 417L216 381" stroke="#d22" stroke-dasharray="2 3"/>
<path d="M221 376v10l-7-5z" fill="#1f2c37" stroke="#2ea32e"/>

<!-- right info panel -->
<rect x="1777" y="95" width="93" height="354" fill="#fffafa"/>
<path d="M1777.500 95v354M1869.500 95v354" stroke="#9fd0ff"/>
<rect x="1782" y="100" width="83" height="165" fill="#1f2c37"/>
<rect x="1782" y="298" width="83" height="147" fill="#1f2c37"/>
<text x="1775" y="123" font-size="26" class="b" fill="#fff" stroke="#fff" stroke-width=".5" textLength="87" lengthAdjust="spacingAndGlyphs">USDJPYm</text>
<text class="dj" x="1786" y="144" font-size="20" fill="#00e5ff" textLength="76" lengthAdjust="spacingAndGlyphs">142.47</text>
<text class="m b" x="1793" y="160" font-size="15" fill="#f0f0f0" textLength="63" lengthAdjust="spacingAndGlyphs">SPD:0.2</text>
<text class="dj" x="1833" y="177" font-size="16" fill="#22dd00" textLength="29" lengthAdjust="spacingAndGlyphs">1:0</text>
<text x="1785" y="191" font-size="14" class="b" fill="#00e5ff" textLength="77" lengthAdjust="spacingAndGlyphs">Daily Open</text>
<text class="dj" x="1793" y="208" font-size="16" fill="#00e5ff" textLength="59" lengthAdjust="spacingAndGlyphs">142.11</text>
<text x="1788" y="225" font-size="14" fill="#f0f0f0" textLength="34" lengthAdjust="spacingAndGlyphs">P2Op</text>
<text x="1852" y="225" font-size="14" class="b" fill="#00e5ff" textLength="10" lengthAdjust="spacingAndGlyphs">0</text>
<text x="1793" y="242" font-size="14" fill="#999" textLength="29" lengthAdjust="spacingAndGlyphs">HiLo</text>
<text x="1853" y="242" font-size="14" class="b" fill="#999" textLength="7" lengthAdjust="spacingAndGlyphs">1</text>
<text x="1795" y="259" font-size="14" fill="#f0f0f0" textLength="27" lengthAdjust="spacingAndGlyphs">ADR</text>
<text x="1837" y="259" font-size="14" class="b" fill="#2ca02c" textLength="23" lengthAdjust="spacingAndGlyphs">176</text>
<text x="1815" y="289" font-size="22" class="b" fill="#888" textLength="43" lengthAdjust="spacingAndGlyphs">40%</text>
<text x="1786" y="318" font-size="17" class="b" fill="#808080" textLength="75" lengthAdjust="spacingAndGlyphs">OpenPips</text>
<text class="se" x="1808" y="342" font-size="25" fill="#1ecfd6" textLength="51" lengthAdjust="spacingAndGlyphs">0. 06</text>
<text x="1787" y="368" font-size="17" class="b" fill="#808080" textLength="71" lengthAdjust="spacingAndGlyphs">OpenPos</text>
<text class="se" x="1812" y="388" font-size="19" fill="#1ecfd6" textLength="49" lengthAdjust="spacingAndGlyphs">0. 73%</text>
<text x="1789" y="414" font-size="17" class="b" fill="#808080" textLength="68" lengthAdjust="spacingAndGlyphs">Daily P/L</text>
<text class="se" x="1670" y="433" font-size="20" fill="#cfcf14" textLength="191" lengthAdjust="spacingAndGlyphs">-922337203685477. 63%</text>

<!-- buttons -->
<rect x="1773.500" y="476.500" width="43" height="23" rx="1" fill="#008000" stroke="#ddd"/>
<text class="dj" x="1795" y="493" font-size="13.500" fill="#f0f0f0" text-anchor="middle">BUY</text>
<rect x="1828.500" y="476.500" width="43" height="23" rx="1" fill="#dc143c" stroke="#ddd"/>
<text class="dj" x="1832" y="493" font-size="13" fill="#f0f0f0" textLength="36" lengthAdjust="spacingAndGlyphs">SELL</text>
<rect x="1786.500" y="510.500" width="76" height="23" rx="1" fill="#000" stroke="#ddd"/>
<text class="dj" x="1795" y="528" font-size="16" fill="#fff" textLength="59" lengthAdjust="spacingAndGlyphs">CLOSE</text>
<text x="1797" y="580" font-size="19" class="b" fill="#8a8a8a" textLength="52" lengthAdjust="spacingAndGlyphs">XU-39</text>
<rect x="1773.500" y="544.500" width="98" height="23" rx="1" fill="#dc143c" stroke="#ddd"/>
<text class="dj" x="1775.500" y="562" font-size="15" fill="#fff" textLength="93" lengthAdjust="spacingAndGlyphs">CLOSEALL</text>
<text x="1768" y="598" font-size="16" class="b" fill="#909090" textLength="108" lengthAdjust="spacingAndGlyphs">Xard Universe</text>

<!-- chart frame -->
<rect x="12.500" y="75.500" width="1868.500" height="531.500" fill="none" stroke="#eee"/>

<!-- axis -->
<text class="ax" x="1886" y="88" textLength="33" lengthAdjust="spacingAndGlyphs">142.860</text>
<text class="ax" x="1886" y="123" textLength="33" lengthAdjust="spacingAndGlyphs">142.810</text>
<text class="ax" x="1886" y="159" textLength="33" lengthAdjust="spacingAndGlyphs">142.760</text>
<text class="ax" x="1886" y="192" textLength="33" lengthAdjust="spacingAndGlyphs">142.715</text>
<text class="ax" x="1886" y="227" textLength="33" lengthAdjust="spacingAndGlyphs">142.665</text>
<text class="ax" x="1886" y="260" textLength="33" lengthAdjust="spacingAndGlyphs">142.620</text>
<text class="ax" x="1886" y="295" textLength="33" lengthAdjust="spacingAndGlyphs">142.570</text>
<text class="ax" x="1886" y="328" textLength="33" lengthAdjust="spacingAndGlyphs">142.525</text>
<text class="ax" x="1886" y="362" textLength="33" lengthAdjust="spacingAndGlyphs">142.475</text>
<text class="ax" x="1886" y="396" textLength="33" lengthAdjust="spacingAndGlyphs">142.430</text>
<text class="ax" x="1886" y="431" textLength="33" lengthAdjust="spacingAndGlyphs">142.380</text>
<text class="ax" x="1886" y="464" textLength="33" lengthAdjust="spacingAndGlyphs">142.335</text>
<text class="ax" x="1886" y="499" textLength="33" lengthAdjust="spacingAndGlyphs">142.285</text>
<text class="ax" x="1886" y="535" textLength="33" lengthAdjust="spacingAndGlyphs">142.235</text>
<text class="ax" x="1886" y="571" textLength="33" lengthAdjust="spacingAndGlyphs">142.185</text>
<text class="ax" x="1886" y="607" textLength="33" lengthAdjust="spacingAndGlyphs">142.135</text>
<path stroke="#ddd" d="M1881 84h3M1881 119h3M1881 155h3M1881 188h3M1881 223h3M1881 256h3M1881 291h3M1881 324h3M1881 358h3M1881 392h3M1881 427h3M1881 460h3M1881 495h3M1881 531h3M1881 567h3M1881 603h3"/>
<rect x="1882" y="360" width="38" height="13" fill="#fff"/>
<text x="1885" y="370.500" font-size="10.500" fill="#111" textLength="34" lengthAdjust="spacingAndGlyphs">142.466</text>

<!-- RSI panel -->
<rect x="12" y="608" width="1869" height="94.500" fill="#17212c"/>
<rect x="12.500" y="608.500" width="1868.500" height="94" fill="none" stroke="#eee"/>
<path d="M12 656H1541" stroke="#5f5f5f" stroke-width="2"/>
<!-- gray spikes -->
<path fill="none" stroke="#5f5f5f" stroke-width="2.500" d="M23 656V618M43 656V618M119 656V618M180 656V618M215 656V618M269 656V618M393 656V618M543 656V618M587 656V618M623 656V618M712 656V618M786 656V618M813 656V618M1040 656V618M1060 656V618M1137 656V618M1147 656V618M1187 656V618M1222 656V618M1315 656V618M1333 656V618M1438 656V618M1468 656V618M1537 656V618
M29 656V695M102 656V695M158 656V695M202 656V695M246 656V695M431 656V695M578 656V695M596 656V695M664 656V695M736 656V695M805 656V695M1036 656V695M1053 656V695M1141 656V695M1156 656V695M1216 656V695M1325 656V695M1444 656V695M1537 656V695"/>
<path stroke="#a03838" stroke-width="2.500" d="M47 638V656M623 638V656M813 638V656M1017 638V656M1147 638V656M1186 638V656M1333 638V656M1468 638V656"/>
<path stroke="#3aa8a8" stroke-width="2.500" d="M329 656V675M735 656V675M953 656V675M1133 656V675M1157 656V675M1263 656V675M1373 656V675"/>
<g fill="#666">
<circle cx="43" cy="618" r="4"/><circle cx="347" cy="618" r="4"/><circle cx="362" cy="618" r="4"/><circle cx="368" cy="618" r="4"/><circle cx="393" cy="618" r="4"/><circle cx="462" cy="618" r="4"/><circle cx="470" cy="618" r="4"/><circle cx="477" cy="618" r="4"/><circle cx="498" cy="618" r="4"/><circle cx="505" cy="618" r="4"/><circle cx="512" cy="618" r="4"/><circle cx="514" cy="618" r="4"/><circle cx="520" cy="618" r="4"/><circle cx="543" cy="618" r="4"/><circle cx="617" cy="618" r="4"/><circle cx="785" cy="618" r="4"/><circle cx="971" cy="618" r="4"/><circle cx="976" cy="618" r="4"/><circle cx="990" cy="618" r="4"/><circle cx="1000" cy="618" r="4"/><circle cx="1137" cy="618" r="4"/><circle cx="1295" cy="618" r="4"/><circle cx="1301" cy="618" r="4"/><circle cx="1307" cy="618" r="4"/><circle cx="1313" cy="618" r="4"/><circle cx="1400" cy="618" r="4"/><circle cx="1415" cy="618" r="4"/><circle cx="1427" cy="618" r="4"/><circle cx="1437" cy="618" r="4"/><circle cx="1466" cy="618" r="4"/>
<circle cx="84" cy="694" r="4"/><circle cx="90" cy="694" r="4"/><circle cx="95" cy="694" r="4"/><circle cx="100" cy="694" r="4"/><circle cx="129" cy="694" r="4"/><circle cx="157" cy="694" r="4"/><circle cx="306" cy="694" r="4"/><circle cx="311" cy="694" r="4"/><circle cx="316" cy="694" r="4"/><circle cx="910" cy="694" r="4"/><circle cx="918" cy="694" r="4"/><circle cx="926" cy="694" r="4"/><circle cx="932" cy="694" r="4"/><circle cx="938" cy="694" r="4"/><circle cx="950" cy="694" r="4"/><circle cx="1034" cy="694" r="4"/><circle cx="1050" cy="694" r="4"/><circle cx="1085" cy="694" r="4"/><circle cx="1101" cy="694" r="4"/><circle cx="1107" cy="694" r="4"/><circle cx="1124" cy="694" r="4"/><circle cx="1155" cy="694" r="4"/><circle cx="1213" cy="694" r="4"/><circle cx="1234" cy="694" r="4"/><circle cx="1240" cy="694" r="4"/><circle cx="1248" cy="694" r="4"/><circle cx="1361" cy="694" r="4"/><circle cx="1367" cy="694" r="4"/>
</g>
<!-- RSI curves -->
<g transform="translate(0 560) scale(.5102 .3333)" fill="none" stroke-linejoin="round">
<path vector-effect="non-scaling-stroke" stroke="#fff" stroke-opacity=".85" stroke-width="1" stroke-dasharray="1 2" d="M25 340L50 260L70 285L95 215L115 220L145 285L175 370L200 398L235 385L275 355L310 370L335 285L365 240L395 300L410 340L425 260L445 255L470 310L490 350L520 260L545 230L570 320L610 385L660 405L685 285L720 215L770 190L815 190L840 265L855 300L880 240L930 180L975 172L1075 172L1118 230L1135 290L1160 285L1195 280L1225 190L1255 180L1290 290L1330 370L1360 280L1385 225L1420 295L1445 360L1480 280L1520 240L1555 195L1568 210"/>
<path vector-effect="non-scaling-stroke" stroke="#2a8ae8" stroke-width="2.500" d="M30 278L45 235L52 270M65 285L90 210L100 203L120 265L140 265M340 280L355 240L365 240L380 265M415 285L425 237L438 245L442 275M505 300L525 215L545 235L555 285M677 285L695 240L720 205L735 210L770 185L815 185L825 265L838 270M860 260L875 235L905 205L930 180L970 168L1075 168L1080 185L1110 178L1125 270M1150 275L1155 258L1160 285M1195 280L1210 205L1225 185L1255 178L1280 275M1355 285L1370 225L1395 215L1410 270M1470 285L1490 240L1520 235L1550 195L1568 235"/>
<path vector-effect="non-scaling-stroke" stroke="#ee82ee" stroke-width="2" d="M145 295L165 360L190 395L215 403L235 375L250 370L260 380L280 345L295 345L310 378L327 310M380 300L395 355L412 325M462 295L480 345L498 360L503 340M555 290L570 345L600 385L660 408L672 330M848 300L852 315M1130 295L1138 310M1165 290L1170 305M1285 300L1310 365L1330 378L1345 320M1415 295L1445 370L1465 305"/>
</g>
<g transform="translate(800 360) scale(.5102 .3333)" fill="none" stroke-linejoin="round">
<path vector-effect="non-scaling-stroke" stroke="#fff" stroke-opacity=".85" stroke-width="1" stroke-dasharray="1 2" d="M0 845L25 885L70 945L110 905L150 880L180 890L200 975L230 1005L305 1010L340 885L380 815L435 790L470 885L500 925L530 895L565 970L650 1000L665 885L695 825L720 935L760 825L785 810L815 890L850 965L900 1003L945 900L1015 785L1060 825L1090 885L1130 1000L1165 960L1210 880L1255 800L1290 885L1325 810L1375 820L1405 885L1440 985"/>
<path vector-effect="non-scaling-stroke" stroke="#2a8ae8" stroke-width="2.500" d="M0 830L10 880L25 860M120 885L132 862L145 875M332 885L350 835L380 800L425 785L435 780L460 870M465 885L478 870M660 880L690 820L702 885M752 885L765 825L785 810L800 875M955 885L985 800L1015 780L1025 825L1050 805L1070 870M1200 885L1220 825L1255 795L1270 870M1295 885L1325 805L1345 855L1375 818L1385 855"/>
<path vector-effect="non-scaling-stroke" stroke="#ee82ee" stroke-width="2" d="M10 890L15 925M35 895L68 947L85 910L100 925L110 900M178 895L190 965L210 1000L300 1012L330 915M460 890L463 900M485 895L495 935L510 910M527 895L550 965L570 960L590 975L650 1003L655 940M700 890L720 940L750 910M802 895L815 945L850 965L880 1000L905 1003L940 905M1075 885L1100 970L1130 1003L1150 995L1175 915M1405 885L1420 970L1450 990"/>
</g>
<text x="1768" y="665" font-size="58" class="b" fill="#ee82ee" stroke="#ee82ee" stroke-width="1.500" textLength="106" lengthAdjust="spacingAndGlyphs">RSI</text>
<text class="ax" x="1884" y="621" textLength="13" lengthAdjust="spacingAndGlyphs">1.2</text>
<text class="ax" x="1884" y="661" textLength="18" lengthAdjust="spacingAndGlyphs">0.00</text>
<text class="ax" x="1884" y="699" textLength="17" lengthAdjust="spacingAndGlyphs">-1.2</text>

<!-- time axis -->
<path stroke="#ddd" d="M77 703v4M141 703v4M205 703v4M269 703v4M333 703v4M397 703v4M461 703v4M525 703v4M589 703v4M653 703v4M717 703v4M781 703v4M845 703v4M909 703v4M973 703v4M1037 703v4M1101 703v4M1165 703v4M1229 703v4M1293 703v4M1357 703v4M1421 703v4M1485 703v4"/>
<text class="tm" x="12" y="716" textLength="52" lengthAdjust="spacingAndGlyphs">12 Sep 2022</text>
<text class="tm" x="76.500" y="716" textLength="55" lengthAdjust="spacingAndGlyphs">12 Sep 14:49</text>
<text class="tm" x="140.500" y="716" textLength="55" lengthAdjust="spacingAndGlyphs">12 Sep 15:21</text>
<text class="tm" x="204.500" y="716" textLength="55" lengthAdjust="spacingAndGlyphs">12 Sep 15:53</text>
<text class="tm" x="268.500" y="716" textLength="55" lengthAdjust="spacingAndGlyphs">12 Sep 16:25</text>
<text class="tm" x="332.500" y="716" textLength="55" lengthAdjust="spacingAndGlyphs">12 Sep 16:57</text>
<text class="tm" x="396.500" y="716" textLength="55" lengthAdjust="spacingAndGlyphs">12 Sep 17:29</text>
<text class="tm" x="460.500" y="716" textLength="55" lengthAdjust="spacingAndGlyphs">12 Sep 18:01</text>
<text class="tm" x="524.500" y="716" textLength="55" lengthAdjust="spacingAndGlyphs">12 Sep 18:33</text>
<text class="tm" x="588.500" y="716" textLength="55" lengthAdjust="spacingAndGlyphs">12 Sep 19:05</text>
<text class="tm" x="652.500" y="716" textLength="55" lengthAdjust="spacingAndGlyphs">12 Sep 19:37</text>
<text class="tm" x="716.500" y="716" textLength="55" lengthAdjust="spacingAndGlyphs">12 Sep 20:09</text>
<text class="tm" x="780.500" y="716" textLength="55" lengthAdjust="spacingAndGlyphs">12 Sep 20:41</text>
<text class="tm" x="844.500" y="716" textLength="55" lengthAdjust="spacingAndGlyphs">12 Sep 21:21</text>
<text class="tm" x="908.500" y="716" textLength="55" lengthAdjust="spacingAndGlyphs">12 Sep 22:06</text>
<text class="tm" x="972.500" y="716" textLength="55" lengthAdjust="spacingAndGlyphs">12 Sep 22:38</text>
<text class="tm" x="1036.500" y="716" textLength="55" lengthAdjust="spacingAndGlyphs">12 Sep 23:12</text>
<text class="tm" x="1100.500" y="716" textLength="55" lengthAdjust="spacingAndGlyphs">12 Sep 23:44</text>
<text class="tm" x="1164.500" y="716" textLength="55" lengthAdjust="spacingAndGlyphs">13 Sep 00:16</text>
<text class="tm" x="1228.500" y="716" textLength="55" lengthAdjust="spacingAndGlyphs">13 Sep 00:48</text>
<text class="tm" x="1292.500" y="716" textLength="55" lengthAdjust="spacingAndGlyphs">13 Sep 01:20</text>
<text class="tm" x="1356.500" y="716" textLength="55" lengthAdjust="spacingAndGlyphs">13 Sep 01:52</text>
<text class="tm" x="1420.500" y="716" textLength="55" lengthAdjust="spacingAndGlyphs">13 Sep 02:24</text>
<text class="tm" x="1484.500" y="716" textLength="55" lengthAdjust="spacingAndGlyphs">13 Sep 02:56</text>

<!-- tabs -->
<rect x="0" y="724" width="1920" height="260" fill="#f0f0f0"/>
<path d="M8 725H1920" stroke="#111" stroke-width="1.500"/>
<rect x="655" y="725" width="143" height="20" fill="#fff" stroke="#111" stroke-width="1.500"/>
<path d="M126 731v14M234.500 731v14M343 731v14M455 731v14M554 731v14" stroke="#999"/>
<text class="tab" x="25" y="740" textLength="90" lengthAdjust="spacingAndGlyphs">BTCUSDm,Daily</text>
<text class="tab" x="137" y="740" textLength="85" lengthAdjust="spacingAndGlyphs">GBPJPYm,Daily</text>
<text class="tab" x="245.500" y="740" textLength="86" lengthAdjust="spacingAndGlyphs">USDJPYm,Daily</text>
<text class="tab" x="353" y="740" textLength="90" lengthAdjust="spacingAndGlyphs">EURUSDm,Daily</text>
<text class="tab" x="467" y="740" textLength="75" lengthAdjust="spacingAndGlyphs">GBPJPYm,M1</text>
<text class="tab" x="565" y="740" textLength="75.500" lengthAdjust="spacingAndGlyphs">USDJPYm,M1</text>
<text x="665.500" y="740" font-size="12" fill="#222" textLength="120.500" lengthAdjust="spacingAndGlyphs">USDJPYm,M1 (visual)</text>
<path d="M1900 730l-2 3 2 3M1915 730l2 3-2 3" fill="none" stroke="#aaa"/>

<!-- tester left strip -->
<rect x="9" y="763" width="14" height="221" fill="#b7cde2"/>
<text x="14" y="757" font-size="9" class="b" fill="#111" text-anchor="middle">x</text>
<text x="0" y="0" font-size="10" fill="#333" transform="translate(17 974) rotate(-90)">测试</text>

<!-- table -->
<rect x="23" y="749" width="1885" height="224" fill="#fff"/>
<path d="M8 749H1908" stroke="#a0a0a0" stroke-width="2"/>
<g fill="#e9e9e9">
<rect x="23" y="750" width="1885" height="20.500"/>
<rect x="23" y="792" width="1885" height="20"/>
<rect x="23" y="834" width="1885" height="20"/>
<rect x="23" y="876" width="1885" height="20"/>
<rect x="23" y="918" width="1885" height="20"/>
<rect x="23" y="960" width="1885" height="14"/>
</g>
<path stroke="#c8c8c8" d="M23 770.500H1908M23 791.500H1908M23 812.500H1908M23 833.500H1908M23 854.500H1908M23 875.500H1908M23 896.500H1908M23 917.500H1908M23 938.500H1908M23 959.500H1908"/>
<rect x="665.500" y="772.500" width="1240" height="16.500" fill="#ff9d9d" stroke="#5b78b0"/>
<g>
<text class="t" x="32" y="765">经测试过的柱数</text><text class="t r" x="619" y="765">3385</text><text class="t" x="666" y="765">用于复盘的即时价数量</text><text class="t r" x="1258" y="765">6627</text><text class="t" x="1306" y="765">复盘模型的质量</text><text class="t r" x="1903" y="765">n/a</text>
<text class="t" x="32" y="786">输入图表错误</text><text class="t r" x="619" y="786">0</text>
<text class="t" x="32" y="807">起始资金</text><text class="t r" x="619" y="807">100.00</text><text class="t" x="1306" y="807">点差</text><text class="t r" x="1903" y="807">2</text>
<text class="t" x="32" y="828">总净盈利</text><text class="t r" x="619" y="828">191.75</text><text class="t" x="666" y="828">总获利</text><text class="t r" x="1258" y="828">280.56</text><text class="t" x="1306" y="828">总亏损</text><text class="t r" x="1903" y="828">-88.81</text>
<text class="t" x="32" y="849">盈利比</text><text class="t r" x="619" y="849">3.16</text><text class="t" x="666" y="849">预期盈利</text><text class="t r" x="1258" y="849">23.97</text>
<text class="t" x="32" y="870">绝对亏损</text><text class="t r" x="619" y="870">1.41</text><text class="t" x="666" y="870">最大亏损</text><text class="t r" x="1258" y="870">144.72 (36.09%)</text><text class="t" x="1306" y="870">相对亏损</text><text class="t r" x="1903" y="870">36.09% (144.72)</text>
<text class="t" x="32" y="891">交易单总计</text><text class="t r" x="619" y="891">8</text><text class="t" x="666" y="891">卖单 (%获利百分比)</text><text class="t r" x="1258" y="891">4 (50.00%)</text><text class="t" x="1306" y="891">买单 (%获利百分比)</text><text class="t r" x="1903" y="891">4 (75.00%)</text>
<text class="t" x="666" y="912">盈利交易(%占总百分比)</text><text class="t r" x="1258" y="912">5 (62.50%)</text><text class="t" x="1306" y="912">亏损交易(%占总百分比)</text><text class="t r" x="1903" y="912">3 (37.50%)</text>
<text class="t r" x="619" y="933">最大:</text><text class="t" x="666" y="933">获利交易</text><text class="t r" x="1258" y="933">82.77</text><text class="t" x="1306" y="933">亏损交易</text><text class="t r" x="1903" y="933">-63.89</text>
<text class="t r" x="619" y="954">平均</text><text class="t" x="666" y="954">获利交易</text><text class="t r" x="1258" y="954">56.11</text><text class="t" x="1306" y="954">亏损交易</text><text class="t r" x="1903" y="954">-29.60</text>
<text class="t r" x="619" y="975">最大:</text><text class="t" x="666" y="975">连续获利金额</text><text class="t r" x="1258" y="975">3 (118.83)</text><text class="t" x="1306" y="975">连续亏损金额</text><text class="t r" x="1903" y="975">2 (-66.70)</text>
</g>
<!-- scrollbar -->
<rect x="1908" y="749" width="12" height="224" fill="#f0f0f0"/>
<rect x="1908" y="767" width="12" height="145" fill="#c8c8c8"/>
<path d="M1911 760l3-4 3 4M1911 963l3 4 3-4" fill="none" stroke="#666"/>

<!-- bottom tabs -->
<rect x="23" y="973" width="1897" height="11" fill="#f0f0f0"/>
<path d="M23 973H1920" stroke="#111" stroke-width="1.500"/>
<rect x="170" y="973" width="43" height="14" fill="#fff" stroke="#111" stroke-width="1.500"/>
<path d="M70 976v8M115 976v8M258 976v8" stroke="#888"/>
<text x="37" y="990" font-size="12" fill="#666">设置</text>
<text x="80" y="990" font-size="12" fill="#666">结果</text>
<text x="124" y="990" font-size="12" fill="#666">净值图</text>
<text x="180" y="990" font-size="12" fill="#111">报告</text>
<text x="224" y="990" font-size="12" fill="#666">日志</text>
</svg>
</body></html>
